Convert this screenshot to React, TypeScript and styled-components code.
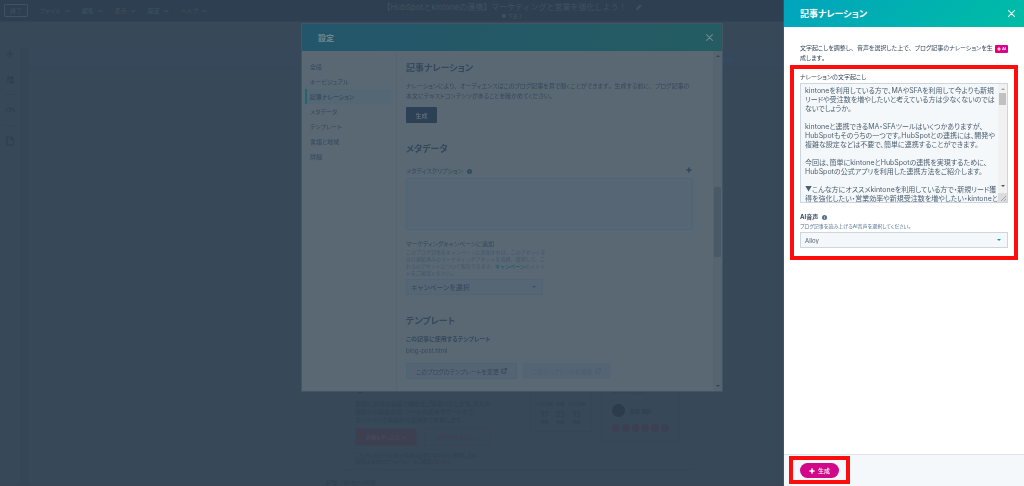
import React from "react";
import styled, { createGlobalStyle, css } from "styled-components";

const Global = createGlobalStyle`
  *, *::before, *::after { box-sizing: border-box; }
  html, body { margin: 0; padding: 0; }
  body {
    background: #374858;
    font-family: Inter, "Noto Sans CJK JP", sans-serif;
    font-feature-settings: "palt";
    color: #33475b;
    overflow: hidden;
  }
  button, select, textarea, input { font: inherit; font-feature-settings: inherit; color: inherit; margin: 0; }
  h1, h2, h3, p, ul { margin: 0; padding: 0; }
  ul { list-style: none; }
`;

/* ---------- editor behind the dialogs ---------- */

const Editor = styled.div`
  display: flex;
  flex-direction: column;
  height: 100vh;
  border-bottom: 1px solid #3b4355;
`;

const TopBar = styled.header`
  display: grid;
  grid-template-columns: 1fr auto 1fr;
  height: 22px;
  background: #2e3f51;
  color: #40525f;
  border-bottom: 1px solid #324354;
`;

const Menu = styled.nav`
  display: flex;
  align-items: center;
  padding-left: 4px;
  gap: 12px;
`;

const MenuButton = styled.button<{ $outlined?: boolean }>`
  display: flex;
  align-items: center;
  gap: 4px;
  height: 13px;
  padding: 0;
  border: 0;
  background: none;
  font-size: 6px;
  line-height: 8px;
  white-space: nowrap;
  ${(p) =>
    p.$outlined &&
    css`
      padding: 0 5px;
      border: 1px solid #405163;
      border-radius: 1px;
    `}
`;

const PageTitle = styled.div`
  display: flex;
  flex-direction: column;
  align-items: center;
  padding-top: 2px;
  font-size: 8px;
  line-height: 10px;
  font-feature-settings: "pkna";
  white-space: nowrap;
  small {
    font-size: 5px;
    line-height: 8px;
  }
`;

const TitleRow = styled.div`
  display: flex;
  align-items: center;
  gap: 9px;
`;

const Workspace = styled.div`
  flex: 1;
  display: flex;
  min-height: 0;
  padding-top: 20px;
`;

const Rail = styled.aside`
  display: flex;
  flex-direction: column;
  align-items: center;
  width: 20px;
  padding-top: 7px;
  gap: 10px;
  color: #2f3f4e;
  hr {
    width: 10px;
    margin: 0;
    border: 0;
    border-top: 1px solid #334453;
  }
`;

const RailGroup = styled.div`
  display: flex;
  flex-direction: column;
  gap: 15px;
`;

const Canvas = styled.main`
  flex: 1;
  display: flex;
  flex-direction: column;
  margin-top: 6px;
  border-left: 9px solid #354656;
`;

const SiteNav = styled.div`
  display: flex;
  align-items: center;
  justify-content: flex-end;
  height: 21px;
  padding-right: 29%;
  background: #37485b;
  border-bottom: 1px solid #354658;
  color: #2d5469;
  font-size: 5px;
`;

const Hero = styled.section`
  display: flex;
  align-items: flex-start;
  width: 350px;
  margin: auto 0 0 315px;
  padding: 0 14px 5px 11px;
  color: #304152;
  border-bottom: 1px solid #344555;
`;

const HeroText = styled.div`
  flex: 1;
  font-size: 6px;
  line-height: 8px;
  white-space: nowrap;
  h2 {
    font-size: 12px;
    line-height: 14px;
    margin-bottom: 4px;
  }
`;

const HeroButtons = styled.div`
  display: flex;
  gap: 7px;
  margin: 4px 0 6px;
`;

const HeroButton = styled.button<{ $filled?: boolean }>`
  width: ${(p) => (p.$filled ? "62px" : "67px")};
  height: 18px;
  padding: 0;
  border: 1px solid #3a4455;
  border-radius: 2px;
  background: ${(p) => (p.$filled ? "#3c4051" : "none")};
  color: ${(p) => (p.$filled ? "#464859" : "#3f4254")};
  font-size: 5px;
  font-weight: 700;
`;

const FinePrint = styled.p`
  font-size: 5px;
  line-height: 6px;
`;

const HeroCard = styled.div<{ $tall?: boolean }>`
  margin-left: 9px;
  width: ${(p) => (p.$tall ? "79px" : "62px")};
  height: ${(p) => (p.$tall ? "60px" : "50px")};
  padding: ${(p) => (p.$tall ? "8px 10px" : "20px 4px 0")};
  border: 1px solid #354655;
  border-top: 0;
  font-size: 4px;
  line-height: 6px;
`;

const Dates = styled.div`
  display: flex;
  justify-content: space-around;
  text-align: center;
  b {
    display: block;
    font-size: 8px;
    line-height: 12px;
    font-weight: 400;
  }
`;

const Person = styled.div`
  display: flex;
  align-items: center;
  gap: 5px;
  margin-top: 8px;
  font-size: 5px;
  font-weight: 700;
`;

const Avatar = styled.span`
  width: 13px;
  height: 13px;
  border-radius: 50%;
  background: #2c3c4b;
`;

const Dots = styled.div`
  display: flex;
  gap: 2px;
  margin-top: 7px;
  i {
    width: 8px;
    height: 8px;
    border-radius: 50%;
    background: #3c4052;
  }
`;

const CanvasFoot = styled.p`
  margin: 9px 0 0 297px !important;
  height: 6px;
  overflow: hidden;
  font-size: 6px;
  line-height: 8px;
  color: #2f3f4f;
`;

/* ---------- settings dialog ---------- */

const Dialog = styled.section`
  position: fixed;
  top: 24px;
  left: 50%;
  width: min(420px, 90vw);
  transform: translateX(-50%);
  background: #5a6874;
  color: #34485c;
  box-shadow: 0 0 0 1px #425465;
`;

const DialogHead = styled.header`
  display: flex;
  align-items: center;
  justify-content: space-between;
  height: 27px;
  padding: 0 9px 0 16px;
  background: linear-gradient(100deg, #24566b, #245c62);
  color: #6f8791;
  h1 {
    font-size: 8px;
    line-height: 12px;
  }
`;

const IconButton = styled.button`
  display: flex;
  padding: 0;
  border: 0;
  background: none;
`;

const DialogBody = styled.div`
  display: flex;
`;

const SideNav = styled.ul`
  width: 95px;
  padding: 8px 5px 0 3px;
  border-right: 1px solid #556472;
`;

const SideLink = styled.a<{ $active?: boolean }>`
  display: block;
  height: 15px;
  padding-left: 3px;
  border-left: 2px solid ${(p) => (p.$active ? "#246478" : "transparent")};
  background: ${(p) => (p.$active ? "#546774" : "none")};
  color: inherit;
  font-size: 6px;
  font-weight: ${(p) => (p.$active ? 500 : 400)};
  line-height: 15px;
  text-decoration: none;
`;

const Content = styled.div`
  flex: 1;
  min-width: 0;
  padding: 11px 20px 12px 9px;
`;

const Heading = styled.h2<{ $spaced?: boolean }>`
  margin-top: ${(p) => (p.$spaced ? "20px" : "0")};
  font-size: 9px;
  font-weight: 700;
  line-height: 12px;
`;

const Para = styled.p`
  margin: 7px 0 6px;
  font-size: 6px;
  line-height: 10px;
  white-space: nowrap;
`;

const FullWidth = styled.span`
  font-feature-settings: normal;
`;

const DarkButton = styled.button`
  display: block;
  width: 31px;
  height: 16px;
  padding: 0;
  border: 0;
  border-radius: 1px;
  background: #2d4156;
  color: #6b7b88;
  font-size: 6px;
`;

const LabelRow = styled.div`
  display: flex;
  justify-content: space-between;
  margin-top: 12px;
  padding-right: 1px;
`;

const Label = styled.label<{ $strong?: boolean }>`
  display: flex;
  align-items: center;
  gap: 4px;
  font-size: 6px;
  font-weight: ${(p) => (p.$strong ? 700 : 400)};
  line-height: 8px;
`;

const MetaBox = styled.textarea`
  display: block;
  width: 100%;
  height: 52px;
  margin: 3px 0 10px !important;
  padding: 4px;
  border: 1px solid #516476;
  background: #576674;
  resize: none;
`;

const Hint = styled.p`
  margin: 1px 0 2px !important;
  font-size: 5px;
  line-height: 7px;
  font-feature-settings: "pkna";
  white-space: nowrap;
  color: #43566a;
  a {
    color: #235b72;
    font-weight: 700;
    text-decoration: none;
  }
`;

const SelectWrap = styled.div<{ $dim?: boolean }>`
  display: flex;
  align-items: center;
  width: ${(p) => (p.$dim ? "137px" : "100%")};
  height: 16px;
  padding-right: 6px;
  border: 1px solid ${(p) => (p.$dim ? "#516476" : "#cbd6e2")};
  background: ${(p) => (p.$dim ? "#576674" : "#f5f8fa")};
  color: ${(p) => (p.$dim ? "#34485c" : "#4d6072")};
  select {
    flex: 1;
    height: 14px;
    padding: 0 4px;
    border: 0;
    background: none;
    appearance: none;
    font-size: ${(p) => (p.$dim ? "7px" : "6px")};
  }
`;

const Caret = styled.span<{ $color: string; $up?: boolean }>`
  border: 2px solid transparent;
  ${(p) =>
    p.$up
      ? css`border-top-width: 0; border-bottom-color: ${p.$color};`
      : css`border-bottom-width: 0; border-top-color: ${p.$color};`}
`;

const TemplateBlock = styled.div`
  margin-top: 8px;
  p {
    margin: 4px 0 8px;
    font-size: 6px;
    line-height: 8px;
  }
`;

const ButtonRow = styled.div`
  display: flex;
  gap: 5px;
`;

const GhostButton = styled.button`
  display: flex;
  align-items: center;
  justify-content: center;
  gap: 2px;
  width: 111px;
  height: 16px;
  padding: 0;
  border: 1px solid #4f6275;
  border-radius: 1px;
  background: #546473;
  font-size: 6px;
  white-space: nowrap;
  &:disabled {
    width: 89px;
    border-color: #556573;
    color: #4b5e70;
  }
`;

const ScrollTrack = styled.div<{ $light?: boolean }>`
  display: flex;
  flex-direction: column;
  align-items: center;
  justify-content: space-between;
  width: 9px;
  padding: ${(p) => (p.$light ? "4px 0 0" : "4px 0")};
  background: ${(p) => (p.$light ? "#f1f1f1" : "#566470")};
`;

const Thumb = styled.span<{ $light?: boolean }>`
  width: 7px;
  height: ${(p) => (p.$light ? "12px" : "70px")};
  margin: ${(p) => (p.$light ? "3px 0 auto" : "130px 0 auto")};
  background: ${(p) => (p.$light ? "#c1c1c1" : "#4a5966")};
`;

/* ---------- narration drawer ---------- */

const Drawer = styled.aside`
  position: fixed;
  top: 0;
  right: 0;
  bottom: 0;
  display: flex;
  flex-direction: column;
  width: 240px;
  background: #fff;
  color: #33475b;
  box-shadow: 0 0 1px 0 #93a0ab;
`;

const DrawerHead = styled.header`
  display: flex;
  align-items: center;
  justify-content: space-between;
  height: 27px;
  padding: 0 9px 0 16px;
  background: linear-gradient(135deg, #00a4bd, #00bda5);
  color: #fff;
  h2 {
    font-size: 9px;
    line-height: 12px;
  }
`;

const DrawerBody = styled.div`
  flex: 1;
  padding: 16px;
`;

const Intro = styled.div`
  display: flex;
  justify-content: space-between;
  align-items: flex-start;
  font-size: 6px;
  line-height: 10px;
  white-space: nowrap;
`;

const AiBadge = styled.span`
  display: flex;
  align-items: center;
  gap: 1px;
  height: 8px;
  margin-top: 2px;
  padding: 0 2px;
  border-radius: 1px;
  background: linear-gradient(90deg, #e5006d, #d6009b);
  color: #fff;
  font-size: 4px;
  font-weight: 700;
`;

const marked = css`
  position: relative;
  &::after {
    content: "";
    position: absolute;
    border: 4px solid #fe0d0d;
    pointer-events: none;
  }
`;

const FormGroup = styled.div`
  ${marked}
  margin-top: 10px;
  &::after {
    inset: -8px -10px -12px;
  }
`;

const Transcript = styled.div`
  display: flex;
  height: 120px;
  margin: 2px 0 10px;
  border: 1px solid #cbd6e2;
  background: #f5f8fa;
  textarea {
    flex: 1;
    min-width: 0;
    padding: 2px 0 0 4px;
    border: 0;
    background: none;
    resize: none;
    overflow: hidden;
    white-space: pre;
    font-size: 7px;
    line-height: 9px;
    color: #4d6072;
  }
`;

const Grip = styled.svg`
  display: block;
  margin-top: 6px;
  background: #dcdcdc;
`;

const VoiceHint = styled.p`
  margin: 1px 0 2px !important;
  font-size: 5px;
  line-height: 8px;
  color: #516f90;
`;

const DrawerFoot = styled.footer`
  display: flex;
  align-items: flex-start;
  height: 32px;
  padding: 8px 16px;
  border-top: 1px solid #dfe3eb;
  background: #f5f8fa;
`;

const GenerateWrap = styled.div`
  ${marked}
  &::after {
    inset: -7px -11px -6px;
  }
`;

const GenerateButton = styled.button`
  display: flex;
  align-items: center;
  justify-content: center;
  gap: 3px;
  width: 39px;
  height: 15px;
  padding: 0;
  border: 0;
  border-radius: 8px;
  background: #d20688;
  color: #fff;
  font-size: 6px;
  font-weight: 500;
`;

/* ---------- icons ---------- */

const Close = () => (
  <svg width="7" height="7" viewBox="0 0 7 7" stroke="currentColor" strokeWidth="1.1" strokeLinecap="round">
    <path d="M.6.6l5.8 5.8M6.4.6L.6 6.4" />
  </svg>
);

const Sparkle = ({ size = 6 }: { size?: number }) => (
  <svg width={size} height={size} viewBox="0 0 10 10" fill="currentColor">
    <path d="M5 0C5.500 3 7 4.500 10 5 7 5.500 5.500 7 5 10 4.500 7 3 5.500 0 5 3 4.500 4.500 3 5 0Z" stroke="currentColor" strokeWidth=".7" />
  </svg>
);

const Info = ({ color, mark }: { color: string; mark: string }) => (
  <svg width="5" height="5" viewBox="0 0 10 10">
    <circle cx="5" cy="5" r="5" fill={color} />
    <path d="M5 2v1.5M5 4.5V8" stroke={mark} strokeWidth="1.5" />
  </svg>
);

const External = () => (
  <svg width="6" height="6" viewBox="0 0 12 12" fill="none" stroke="currentColor" strokeWidth="1.8">
    <path d="M5 2.500H1.500v8h8V7M7 1h4v4M11 1L5 7" />
  </svg>
);

const Chevron = () => (
  <svg width="5" height="4" viewBox="0 0 10 6" fill="none" stroke="currentColor" strokeWidth="2">
    <path d="M1 1l4 4 4-4" />
  </svg>
);

const Pencil = () => (
  <svg width="6" height="6" viewBox="0 0 12 12" fill="currentColor">
    <path d="M0 12l1-4 7-7 3 3-7 7z" />
  </svg>
);

const railIcon = { width: 10, height: 10, viewBox: "0 0 20 20", fill: "none", stroke: "currentColor", strokeWidth: 2.2 };

/* Kana are set proportionally, commas and full stops keep their full width. */
const Prose = ({ children }: { children: string }) => (
  <>
    {children.split(/([、。])/).map((part, i) => (i % 2 ? <FullWidth key={i}>{part}</FullWidth> : part))}
  </>
);

const menus = ["ファイル", "編集", "表示", "設定", "ヘルプ"];
const sections = ["全般", "キービジュアル", "記事ナレーション", "メタデータ", "テンプレート", "言語と地域", "詳細"];
const days = [["12月水曜", "17"], ["木曜", "25"], ["1月の木曜", "15"]];

const transcript = `kintoneを利用している方で、MAやSFAを利用して今よりも新規
リードや受注数を増やしたいと考えている方は少なくないのでは
ないでしょうか。

kintoneと連携できるMA・SFAツールはいくつかありますが、
HubSpotもそのうちの一つです。HubSpotとの連携には、開発や
複雑な設定などは不要で、簡単に連携することができます。

今回は、簡単にkintoneとHubSpotの連携を実現するために、
HubSpotの公式アプリを利用した連携方法をご紹介します。

▼こんな方にオススメkintoneを利用している方で・新規リード獲
得を強化したい・営業効率や新規受注数を増やしたい・kintoneと
他のツールを連携したい`;

export default function App() {
  return (
    <div lang="ja">
      <Global />
      <Editor>
        <TopBar>
          <Menu>
            <MenuButton $outlined>終了</MenuButton>
            {menus.map((m) => (
              <MenuButton key={m}>
                {m}
                <Chevron />
              </MenuButton>
            ))}
          </Menu>
          <PageTitle>
            <TitleRow>
              【HubSpotとkintoneの連携】マーケティングと営業を強化しよう！
              <Pencil />
            </TitleRow>
            <small>● 下書き</small>
          </PageTitle>
        </TopBar>
        <Workspace>
          <Rail>
            <RailGroup>
              <svg {...railIcon}><path d="M10 3v14M3 10h14" /></svg>
              <svg {...railIcon}><path d="M6 3v13h8M6 8h8M12 6h4v4h-4zM12 14h4v4h-4z" /></svg>
            </RailGroup>
            <hr />
            <svg {...railIcon}><path d="M2 14a8 8 0 0 1 16 0M8 14l5-6M8 14h4" /></svg>
            <hr />
            <svg {...railIcon}><path d="M4 2h8l5 5v11H4zM12 2v5h5" /></svg>
          </Rail>
          <Canvas>
            <SiteNav>日本語 ▾</SiteNav>
            <Hero>
              <HeroText>
                <h2>う</h2>
                <p>御社に最適な製品と機能をご提案いたします。導入の<br />相談から構築支援、ツールの活用サポートまで。<br />オンラインで構築から活用まで支援します。</p>
                <HeroButtons>
                  <HeroButton $filled>詳細を申し込む →</HeroButton>
                  <HeroButton>無料で試してみる →</HeroButton>
                </HeroButtons>
                <FinePrint>ご入力いただいた個人情報はお問い合わせに利用します。<br />詳細は当社のプライバシーをご確認ください。</FinePrint>
              </HeroText>
              <HeroCard>
                <Dates>
                  {days.map(([d, n]) => (
                    <div key={n}>
                      {d}
                      <b>{n}</b>開催
                    </div>
                  ))}
                </Dates>
              </HeroCard>
              <HeroCard $tall>
                担当コンサルタント
                <Person>
                  <Avatar />
                  相馬 理紗
                </Person>
                <Dots>
                  <i /><i /><i /><i /><i /><i />
                </Dots>
              </HeroCard>
            </Hero>
            <CanvasFoot>起業 / kintone連携</CanvasFoot>
          </Canvas>
        </Workspace>
      </Editor>

      <Dialog role="dialog" aria-labelledby="settings-title">
        <DialogHead>
          <h1 id="settings-title">設定</h1>
          <IconButton aria-label="閉じる"><Close /></IconButton>
        </DialogHead>
        <DialogBody>
          <SideNav>
            {sections.map((s, i) => (
              <li key={s}>
                <SideLink href="#" $active={i === 2}>{s}</SideLink>
              </li>
            ))}
          </SideNav>
          <Content>
            <Heading>記事ナレーション</Heading>
            <Para>
              <Prose>ナレーションにより、オーディエンスはこのブログ記事を耳で聞くことができます。生成する前に、ブログ記事の</Prose>
              <br />
              <Prose>本文にテキストコンテンツがあることを確かめてください。</Prose>
            </Para>
            <DarkButton>生成</DarkButton>

            <Heading $spaced>メタデータ</Heading>
            <LabelRow>
              <Label htmlFor="meta">メタディスクリプション <Info color="#2f4a62" mark="#4a6074" /></Label>
              <Sparkle />
            </LabelRow>
            <MetaBox id="meta" />
            <Label htmlFor="campaign">マーケティングキャンペーンに追加</Label>
            <Hint>
              このブログ記事をキャンペーンに追加すれば、このアセットを<br />
              含む接続済みのマーケティングアセットを追跡、管理して、こ<br />
              れらのアセットについて報告できます。<a href="#">キャンペーン</a>のメリッ<br />
              トをご確認ください。
            </Hint>
            <SelectWrap $dim>
              <select id="campaign"><option>キャンペーンを選択</option></select>
              <Caret $color="#235b6c" />
            </SelectWrap>

            <Heading $spaced>テンプレート</Heading>
            <TemplateBlock>
              <Label as="h3" $strong>この記事に使用するテンプレート</Label>
              <p>blog-post.html</p>
              <ButtonRow>
                <GhostButton>このブログのテンプレートを変更 <External /></GhostButton>
                <GhostButton disabled>このテンプレートを編集 <External /></GhostButton>
              </ButtonRow>
            </TemplateBlock>
          </Content>
          <ScrollTrack>
            <Caret $up $color="#34434f" />
            <Thumb />
            <Caret $color="#34434f" />
          </ScrollTrack>
        </DialogBody>
      </Dialog>

      <Drawer role="dialog" aria-labelledby="drawer-title">
        <DrawerHead>
          <h2 id="drawer-title">記事ナレーション</h2>
          <IconButton aria-label="閉じる"><Close /></IconButton>
        </DrawerHead>
        <DrawerBody>
          <Intro>
            <p>
              <Prose>文字起こしを調整し、音声を選択した上で、ブログ記事のナレーションを生</Prose>
              <br />
              <Prose>成します。</Prose>
            </p>
            <AiBadge><Sparkle size={4} />AI</AiBadge>
          </Intro>
          <FormGroup>
            <Label htmlFor="transcript">ナレーションの文字起こし</Label>
            <Transcript>
              <textarea id="transcript" defaultValue={transcript} />
              <ScrollTrack $light>
                <Caret $up $color="#a3a3a3" />
                <Thumb $light />
                <Caret $color="#505050" />
                <Grip width="9" height="9" viewBox="0 0 9 9" stroke="#8a8a8a" strokeWidth=".7">
                  <path d="M3 8l5-5M6 8l2-2" />
                </Grip>
              </ScrollTrack>
            </Transcript>
            <Label htmlFor="voice" $strong>AI音声 <Info color="#516f90" mark="#d5dde6" /></Label>
            <VoiceHint>ブログ記事を読み上げるAI音声を選択してください。</VoiceHint>
            <SelectWrap>
              <select id="voice"><option>Alloy</option></select>
              <Caret $color="#00a4bd" />
            </SelectWrap>
          </FormGroup>
        </DrawerBody>
        <DrawerFoot>
          <GenerateWrap>
            <GenerateButton><Sparkle />生成</GenerateButton>
          </GenerateWrap>
        </DrawerFoot>
      </Drawer>
    </div>
  );
}
